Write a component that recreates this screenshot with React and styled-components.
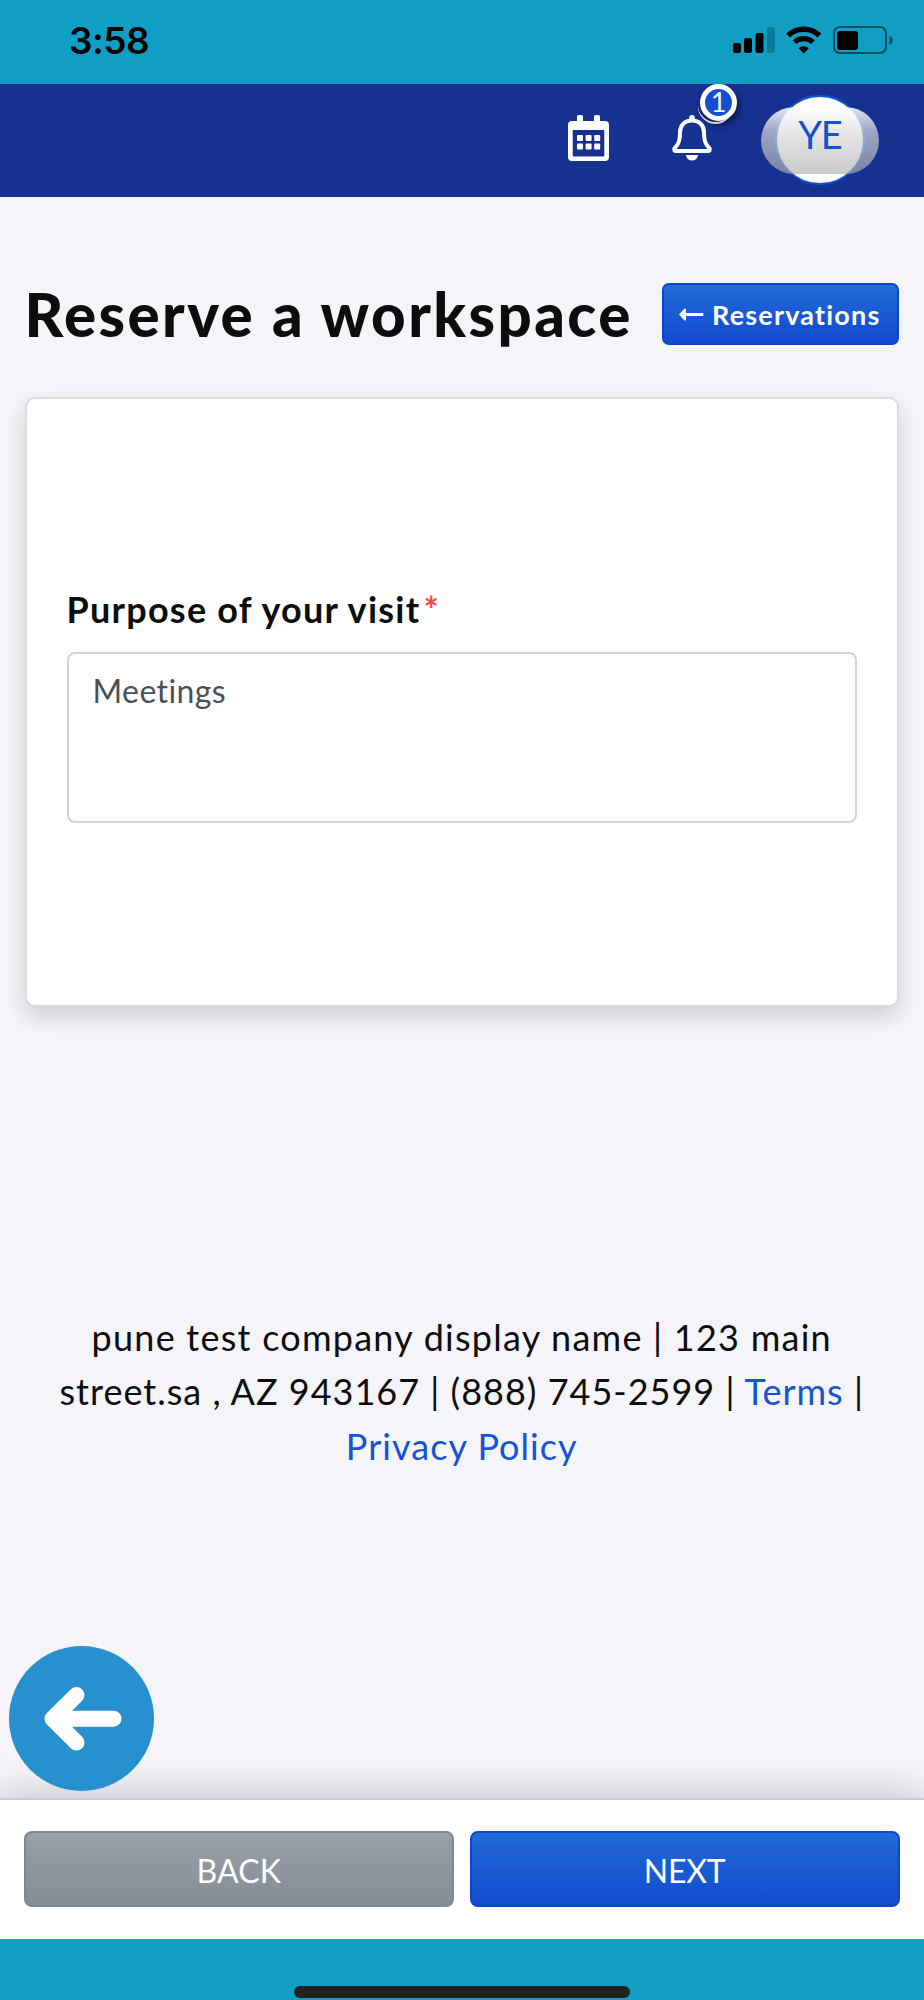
import React, { useState } from 'react'
import styled, { createGlobalStyle, css } from 'styled-components'

const GlobalStyle = createGlobalStyle`
  * {
    box-sizing: border-box;
  }

  body {
    margin: 0;
    background: #f4f4f9;
    color: #0d0d0d;
    font-family: Lato, "Open Sans", sans-serif;
  }
`

const Screen = styled.div`
  display: flex;
  flex-direction: column;
  width: 924px;
  height: 2000px;
  overflow: hidden;
  background: #f4f4f9;
`

const StatusBar = styled.div`
  display: flex;
  align-items: center;
  justify-content: space-between;
  flex: none;
  height: 84px;
  padding: 0 31px 4px 69px;
  background: #109ec5;
`

const Clock = styled.span`
  font: 600 37px/1 Inter, sans-serif;
  letter-spacing: -0.5px;
  color: #000;
`

const StatusIcons = styled.svg`
  width: 162px;
  height: 32px;
`

const NavBar = styled.nav`
  display: flex;
  align-items: center;
  justify-content: flex-end;
  flex: none;
  height: 113px;
  padding-right: 45px;
  background: #16318f;
`

const NavButton = styled.button`
  position: relative;
  display: flex;
  padding: 0;
  margin: 0 ${props => props.$gap} 6px 0;
  border: 0;
  background: none;
`

const Badge = styled.span`
  position: absolute;
  top: -31px;
  left: 28px;
  width: 37px;
  height: 37px;
  border: 5px solid #fff;
  border-radius: 50%;
  background: #1450d2;
  box-shadow: -3px 2px 0 -1px #17245f, -3px 4px 0 -1px #d5d5d8, 2px 4px 6px rgba(0, 0, 0, .5);
  color: #fff;
  font: 400 27px/26px Lato, sans-serif;
  text-align: center;
`

const AvatarButton = styled.button`
  position: relative;
  display: flex;
  align-items: center;
  justify-content: center;
  width: 118px;
  height: 67px;
  padding: 0;
  border: 0;
  background: none;

  /* glossy pill that lies over the round avatar */
  &::after {
    content: "";
    position: absolute;
    inset: 0;
    border-radius: 34px;
    background: linear-gradient(
      rgba(255, 255, 255, .88),
      rgba(222, 222, 222, .68) 35%,
      rgba(175, 175, 175, .65)
    );
  }
`

const Avatar = styled.span`
  flex: none;
  width: 90px;
  height: 90px;
  margin-top: -2px;
  border: 2px solid #1351d3;
  border-radius: 50%;
  background: #fbfcfe;
`

const Initials = styled.span`
  position: absolute;
  inset: 0;
  z-index: 1;
  color: #1450d2;
  font: 400 38px/55px Lato, sans-serif;
  letter-spacing: -1px;
  text-align: center;
`

const Main = styled.main`
  flex: 1;
  padding: 86px 25px 0 24.5px;
`

const TitleRow = styled.div`
  display: flex;
  align-items: center;
  justify-content: space-between;
  height: 62px;
`

const Title = styled.h1`
  margin: 0;
  font-size: 60px;
  font-weight: 900;
  line-height: 62px;
  letter-spacing: ${props => props.$tracking};
  white-space: nowrap;
`

const blueFill = css`
  border: 2px solid #0c46cf;
  background: linear-gradient(#256bd8, #1b5fd4 35%, #134bcf);
`

const greyFill = css`
  border: 2px solid #7e8791;
  background: linear-gradient(#999fa7, #848c96);
`

const LinkButton = styled.button`
  ${blueFill}
  display: flex;
  align-items: center;
  gap: 8px;
  width: 237px;
  height: 62px;
  padding: 1px 0 0 15px;
  border-radius: 7px;
  color: #fff;
  font: 700 27px/1 Lato, sans-serif;
  letter-spacing: 1.2px;
`

const Card = styled.section`
  height: 610px;
  margin-top: 52px;
  padding: 188px 40px 0;
  border: 2px solid #ddd;
  border-radius: 10px;
  background: #fff;
  box-shadow: 0 10px 22px rgba(0, 0, 0, .15);
`

const Label = styled.label`
  display: block;
  height: 65px;
  font-size: 36px;
  font-weight: 700;
  line-height: 44px;
  letter-spacing: ${props => props.$tracking};
  white-space: nowrap;
`

const Required = styled.span`
  margin-left: 3px;
  color: #ff4848;
`

const PurposeInput = styled.textarea`
  display: block;
  width: 790px;
  height: 171px;
  padding: 15px 24px;
  border: 2px solid #ced4da;
  border-radius: 8px;
  outline: none;
  background: #fff;
  color: #495057;
  font: 400 32px/44px Lato, sans-serif;
  letter-spacing: 0.4px;
  resize: none;
`

const CompanyInfo = styled.footer`
  margin-top: 303px;
  font-size: 36px;
  line-height: 54.4px;
  text-align: center;
`

const InfoLine = styled.div`
  letter-spacing: ${props => props.$tracking};
  white-space: nowrap;
`

const InfoLink = styled.a`
  color: #1453d6;
  text-decoration: none;
`

const FloatingBack = styled.button`
  position: absolute;
  top: 1646px;
  left: 8.5px;
  display: flex;
  width: 145px;
  height: 145px;
  padding: 0;
  border: 0;
  border-radius: 50%;
  background: #2890cf;
`

const ActionBar = styled.div`
  display: grid;
  grid-template-columns: 1fr 1fr;
  gap: 16px;
  flex: none;
  height: 141px;
  padding: 31px 24.5px 32px 24px;
  border-top: 2px solid #cbcbcd;
  background: #fff;
  box-shadow: 0 0 40px rgba(0, 0, 0, .24);
`

const ActionButton = styled.button`
  ${props => props.$primary ? blueFill : greyFill}
  height: 76px;
  padding: 3px 0 0;
  border-radius: 8px;
  color: #fff;
  font: 400 32px/1 Lato, sans-serif;
  letter-spacing: ${props => props.$tracking};
`

const HomeArea = styled.div`
  display: flex;
  justify-content: center;
  align-items: flex-end;
  flex: none;
  z-index: 1;
  height: 61px;
  padding-bottom: 2px;
  background: #109ec5;
`

const HomeIndicator = styled.div`
  width: 336px;
  height: 12px;
  border-radius: 6px;
  background: #212121;
`

const PhoneStatus = () => (
  <StatusIcons viewBox="731 24 162 32">
    <rect x="733" y="43" width="8" height="10" rx="2" />
    <rect x="744" y="38" width="8" height="15" rx="2" />
    <rect x="755.5" y="33" width="8" height="20" rx="2" />
    <rect x="767" y="27" width="8" height="26" rx="2" opacity=".22" />
    <path d="M788 35.5a22.8 22.8 0 0 1 31.4 0" fill="none" stroke="#000" strokeWidth="5.6" />
    <path d="M794.4 42.2a13.8 13.8 0 0 1 18.6 0" fill="none" stroke="#000" strokeWidth="5.2" />
    <path d="M798.6 48.2a7.5 7.5 0 0 1 10.2 0L803.7 53.4z" />
    <rect x="834" y="27" width="52" height="26" rx="6" fill="none" stroke="#000" strokeWidth="2" opacity=".5" />
    <rect x="837" y="31" width="21" height="19" rx="3" />
    <path d="M889.5 36c4.2 1 4.2 8 0 9z" opacity=".5" />
  </StatusIcons>
)

const CalendarIcon = () => (
  <svg width="42" height="46" viewBox="0 0 42 46" fill="#fff">
    <path
      fillRule="evenodd"
      d="M9 1.5Q9 0 10.5 0h3Q15 0 15 1.5V6h11V1.5Q26 0 27.5 0h3Q32 0 32 1.5V6h5q4 0 4 4v32q0 4-4 4H4q-4 0-4-4V10q0-4 4-4h5zM4.7 15v25.5q0 1 1 1h29.6q1 0 1-1V15z"
    />
    {[20, 28.5].map(y => [9, 17.6, 26.2].map(x => (
      <rect key={`${x}-${y}`} x={x} y={y} width="6" height="6" rx="1" />
    )))}
  </svg>
)

const BellIcon = () => (
  <svg width="40" height="46" viewBox="0 0 40 46" fill="none">
    <path
      d="M20 5.5C12.5 5.5 8 10.5 8 17.5C8 26 6.5 29.5 2.4 33.5Q1.8 36 4 36H36Q38.2 36 37.6 33.5C33.5 29.5 32 26 32 17.5C32 10.5 27.5 5.5 20 5.5Z"
      stroke="#fff"
      strokeWidth="4"
      strokeLinejoin="round"
    />
    <path d="M17.2 6V2.8a2.8 2.8 0 0 1 5.6 0V6z" fill="#fff" />
    <path d="M14 40h12a6 5.6 0 0 1-12 0z" fill="#fff" />
  </svg>
)

const ReturnIcon = () => (
  <svg width="25" height="13" viewBox="0 0 25 13" fill="#fff">
    <path d="M0 6.5L5.5 .6Q7 0 7 1.5V5H24.3V8H7v3.5Q7 13 5.5 12.4z" />
  </svg>
)

const BigArrow = () => (
  <svg width="145" height="145" viewBox="0 0 145 145" fill="none" stroke="#fff" strokeWidth="16" strokeLinecap="round" strokeLinejoin="round">
    <path d="M67.500 49L43.500 72.700L67.500 96.500M50 72.700H104.500" />
    <path d="M56 61V84L46 72.700z" fill="#fff" strokeWidth="4" />
  </svg>
)

const App = () => {
  const [purpose, setPurpose] = useState('Meetings')

  return (
    <Screen>
      <GlobalStyle />
      <StatusBar>
        <Clock>3:58</Clock>
        <PhoneStatus />
      </StatusBar>
      <NavBar>
        <NavButton $gap="62px" aria-label="Calendar">
          <CalendarIcon />
        </NavButton>
        <NavButton $gap="49px" aria-label="Notifications">
          <BellIcon />
          <Badge>1</Badge>
        </NavButton>
        <AvatarButton>
          <Avatar />
          <Initials>YE</Initials>
        </AvatarButton>
      </NavBar>
      <Main>
        <TitleRow>
          <Title $tracking="2.45px">Reserve a workspace</Title>
          <LinkButton>
            <ReturnIcon />
            Reservations
          </LinkButton>
        </TitleRow>
        <Card>
          <Label htmlFor="purpose" $tracking="1.25px">
            Purpose of your visit<Required>*</Required>
          </Label>
          <PurposeInput
            id="purpose"
            value={purpose}
            spellCheck={false}
            onChange={e => setPurpose(e.target.value)}
          />
        </Card>
        <CompanyInfo>
          <InfoLine $tracking="1.25px">pune test company display name | 123 main</InfoLine>
          <InfoLine $tracking="1px">
            street.sa , AZ 943167 | (888) 745-2599 | <InfoLink href="#terms">Terms</InfoLink> |
          </InfoLine>
          <InfoLine $tracking="1.05px">
            <InfoLink href="#privacy">Privacy Policy</InfoLink>
          </InfoLine>
        </CompanyInfo>
      </Main>
      <ActionBar>
        <ActionButton $tracking="0.2px">BACK</ActionButton>
        <ActionButton $primary $tracking="-0.2px">NEXT</ActionButton>
      </ActionBar>
      <FloatingBack aria-label="Go back">
        <BigArrow />
      </FloatingBack>
      <HomeArea>
        <HomeIndicator />
      </HomeArea>
    </Screen>
  )
}

export default App
